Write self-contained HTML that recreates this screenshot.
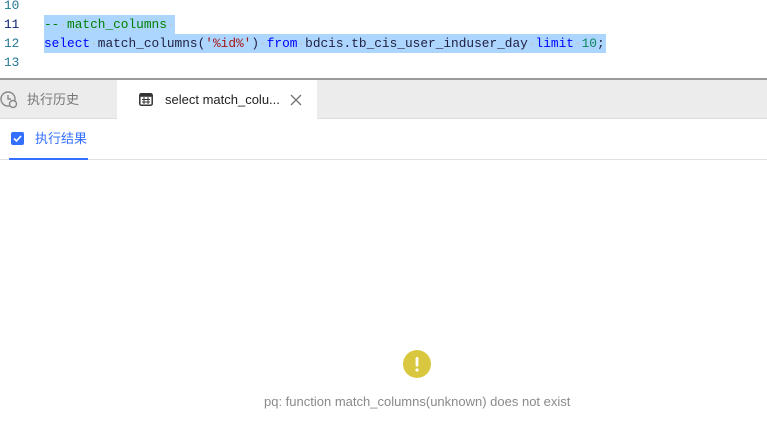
<!DOCTYPE html>
<html><head><meta charset="utf-8"><style>
*{margin:0;padding:0;box-sizing:border-box}
body{width:767px;height:422px;overflow:hidden;background:#fff;position:relative;font-family:"Liberation Sans","Noto Sans CJK SC",sans-serif}
.code{position:absolute;left:0;top:0;width:767px;height:79px;font-family:"Liberation Mono",monospace;font-size:12.8px}
.ln{position:absolute;left:4px;color:#237893;height:19px;line-height:19px}
.line{position:absolute;left:44px;height:19px;line-height:19px;white-space:pre;color:#1f1f3f}
.sel{background:#add6ff}
.k{color:#0000ff}.c{color:#008000}.s{color:#a31515}.n{color:#098658}.d{color:#c0c0c0}
.sep{position:absolute;left:0;top:78px;width:767px;height:2px;background:#9a9a9a}
.tabbar{position:absolute;left:0;top:80px;width:767px;height:39px;background:#ececec;border-bottom:1px solid #ddd}
.tab2{position:absolute;left:117px;top:80px;width:200px;height:39px;background:#fff}
.t{position:absolute;font-size:13px;line-height:16px}
.ul{position:absolute;left:0;top:159px;width:767px;height:1px;background:#e0e0e0}
.act{position:absolute;left:9px;top:158px;width:79px;height:2px;background:#3370ff}
</style></head><body>
<div class="code">
<div class="ln" style="top:-4px">10</div>
<div class="ln" style="top:15px;color:#0b216f">11</div>
<div class="ln" style="top:34px">12</div>
<div class="ln" style="top:53px">13</div>
<div class="line sel" style="top:15px;width:131px"><span class="c">--<span class="d">·</span>match_columns<span class="d">·</span></span></div>
<div class="line sel" style="top:34px;width:562px"><span class="k">select</span><span class="d">·</span>match_columns(<span class="s">'%id%'</span>)<span class="d">·</span><span class="k">from</span><span class="d">·</span>bdcis.tb_cis_user_induser_day<span class="d">·</span><span class="k">limit</span><span class="d">·</span><span class="n">10</span>;</div>
</div>
<div class="sep"></div>
<div class="tabbar"></div>
<div class="tab2"></div>
<svg style="position:absolute;left:0;top:91px" width="18" height="18" viewBox="0 0 18 18"><circle cx="8" cy="8" r="7" fill="none" stroke="#888" stroke-width="1.4"/><path d="M8 4v4h3" fill="none" stroke="#888" stroke-width="1.4"/><circle cx="13" cy="13" r="3.5" fill="#ececec" stroke="#888" stroke-width="1.4"/></svg>
<div class="t" style="left:27px;top:92px;color:#777">执行历史</div>
<svg style="position:absolute;left:139px;top:93px" width="14" height="13" viewBox="0 0 14 13"><rect x="0.8" y="0.8" width="12.4" height="11.4" rx="1.5" fill="none" stroke="#333" stroke-width="1.5"/><rect x="0.8" y="0.8" width="12.4" height="3" fill="#333"/><path d="M3 6.5h8M3 9h8M5 4v7M9 4v7" stroke="#333" stroke-width="1"/></svg>
<div class="t" style="left:165px;top:92px;color:#222">select match_colu...</div>
<svg style="position:absolute;left:290px;top:94px" width="12" height="12" viewBox="0 0 12 12"><path d="M1 1L11 11M11 1L1 11" stroke="#777" stroke-width="1.3"/></svg>
<svg style="position:absolute;left:11px;top:132px" width="13" height="13" viewBox="0 0 13 13"><rect width="13" height="13" rx="2" fill="#3370ff"/><path d="M3 6.5l2.5 2.5 4.5-5" fill="none" stroke="#fff" stroke-width="1.6"/></svg>
<div class="t" style="left:35px;top:131px;color:#3370ff">执行结果</div>
<div class="ul"></div><div class="act"></div>
<svg style="position:absolute;left:403px;top:350px" width="28" height="28" viewBox="0 0 28 28"><circle cx="14" cy="14" r="14" fill="#d9c83f"/><rect x="12.6" y="7" width="2.8" height="9.5" rx="1.3" fill="#fff"/><circle cx="14" cy="20" r="1.6" fill="#fff"/></svg>
<div class="t" style="left:264px;top:394px;color:#8a8a8a">pq: function match_columns(unknown) does not exist</div>
</body></html>
